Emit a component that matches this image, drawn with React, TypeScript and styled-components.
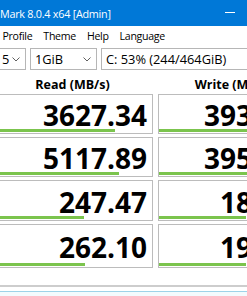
import * as React from "react";
import styled, { createGlobalStyle } from "styled-components";

const GlobalStyle = createGlobalStyle`
	html, body {
		margin: 0;
		padding: 0;
		background: #fff;
		overflow: hidden;
	}
	body {
		font-family: "Open Sans", "Noto Sans", sans-serif;
	}
`;

const Window = styled.div`
	width: 247px;
	height: 296px;
	overflow: hidden;
	background: #fff;
`;

const TitleBar = styled.div`
	height: 26px;
	background: #0078d7;
	color: #fff;
	display: flex;
	align-items: center;
	justify-content: space-between;
	font-size: 10.8px;
	letter-spacing: -0.25px;
`;

const Title = styled.span`
	margin-top: 1px;
	white-space: nowrap;
`;

const MinButton = styled.div`
	width: 46px;
	height: 26px;
	margin-right: -6px;
	display: flex;
	align-items: center;
	justify-content: center;

	&::before {
		content: "";
		width: 10px;
		height: 1px;
		margin-top: -2px;
		background: #fff;
	}
`;

const MenuBar = styled.div`
	height: 20px;
	display: flex;
	align-items: center;
	margin-left: -3px;
	font-size: 10.6px;
	letter-spacing: -0.3px;
	color: #000;
`;

const MenuItem = styled.span`
	padding: 0 5.5px;
`;

const ControlRow = styled.div`
	display: flex;
	gap: 4px;
	margin-top: 2px;
	margin-left: -3px;
	height: 22px;
`;

const Combo = styled.div<{ $w: number }>`
	width: ${(p) => p.$w}px;
	flex-shrink: 0;
	box-sizing: border-box;
	border: 1px solid #b6b6b6;
	background: #fff;
	display: flex;
	align-items: center;
	justify-content: space-between;
	padding: 0 5px 0 4px;
	font-size: 12.8px;
	color: #000;
	white-space: nowrap;
`;

const Chevron = () => (
	<svg width="8" height="5" viewBox="0 0 8 5">
		<polyline points="0.5,0.5 4,4 7.5,0.5" fill="none" stroke="#606060" strokeWidth="1" />
	</svg>
);

const Columns = styled.div`
	display: grid;
	grid-template-columns: 156px 156px;
	column-gap: 5px;
	margin-left: -3px;
`;

const HeaderRow = styled(Columns)`
	height: 24px;
	align-items: center;
`;

const Header = styled.div`
	text-align: center;
	font-weight: 700;
	font-size: 12.5px;
	padding: 4px 5px 0 0;
	color: #000;
	white-space: nowrap;
`;

const Results = styled(Columns)`
	row-gap: 3px;
`;

const Cell = styled.div<{ $h: number }>`
	position: relative;
	height: ${(p) => p.$h}px;
	box-sizing: border-box;
	border: 1px solid #bcbcbc;
	background: #fff;
	display: flex;
	align-items: center;
	justify-content: flex-end;
	padding: 2px 5px 0 0;
	font-weight: 700;
	font-size: 28px;
	color: #000;
	overflow: hidden;
`;

const Bar = styled.div`
	position: absolute;
	left: 0;
	bottom: 1px;
	height: 3px;
	background: #7bc44d;
`;

const Footer = styled.div`
	margin-top: 17px;
	border-top: 2px solid #cdcdcd;
`;

const CommentBox = styled.div`
	margin-top: 4px;
	height: 20px;
	border-top: 1px solid #9dd2e8;
	background: #f3fafd;
`;

const rows = [
	{ read: "3627.34", readBar: 117, write: "3932.61", writeBar: 140, h: 40 },
	{ read: "5117.89", readBar: 121, write: "3953.17", writeBar: 140, h: 40 },
	{ read: "247.47", readBar: 86, write: "183.42", writeBar: 87, h: 41 },
	{ read: "262.10", readBar: 87, write: "194.86", writeBar: 87, h: 44 },
];

export default function App() {
	return <>
		<GlobalStyle />
		<Window>
			<TitleBar>
				<Title>Mark 8.0.4 x64 [Admin]</Title>
				<MinButton />
			</TitleBar>
			<MenuBar>
				<MenuItem>Profile</MenuItem>
				<MenuItem>Theme</MenuItem>
				<MenuItem>Help</MenuItem>
				<MenuItem>Language</MenuItem>
			</MenuBar>
			<ControlRow>
				<Combo $w={29}>5<Chevron /></Combo>
				<Combo $w={67}>1GiB<Chevron /></Combo>
				<Combo $w={220}>C: 53% (244/464GiB)<Chevron /></Combo>
			</ControlRow>
			<HeaderRow>
				<Header>Read (MB/s)</Header>
				<Header>Write (MB/s)</Header>
			</HeaderRow>
			<Results>
				{rows.map((r) => (
					<React.Fragment key={r.read}>
						<Cell $h={r.h}>
							{r.read}
							<Bar style={{ width: r.readBar }} />
						</Cell>
						<Cell $h={r.h}>
							{r.write}
							<Bar style={{ width: r.writeBar }} />
						</Cell>
					</React.Fragment>
				))}
			</Results>
			<Footer>
				<CommentBox />
			</Footer>
		</Window>
	</>;
}
